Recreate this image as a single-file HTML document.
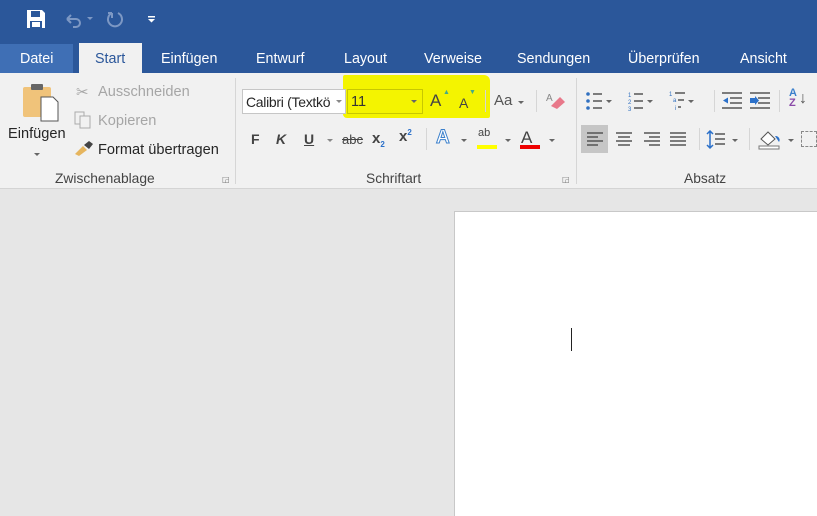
<!DOCTYPE html>
<html><head><meta charset="utf-8"><style>
*{margin:0;padding:0;box-sizing:border-box}
body{width:817px;height:516px;overflow:hidden;position:relative;background:#e6e6e6;font-family:"Liberation Sans","DejaVu Sans",sans-serif;}
.a{position:absolute;white-space:nowrap}
.tab{position:absolute;top:51px;font-size:14.3px;color:#fff}
.t{font-size:14.6px;color:#262626}
.g{color:#a6a6a6}
.lbl{font-size:13.8px;color:#444;top:171px}
.sep{position:absolute;width:1px;background:#d6d6d6}
.dd{position:absolute;width:0;height:0;border-left:3px solid transparent;border-right:3px solid transparent;border-top:3px solid #666}
</style></head><body>
<div class="a" style="left:0;top:0;width:817px;height:73px;background:#2b579a"></div>
<svg class="a" style="left:26px;top:9px" width="20" height="20" viewBox="0 0 20 20"><path d="M1 1h15l3 3v15H1z" fill="#fff"/><rect x="5" y="2" width="9" height="6" fill="#2b579a"/><rect x="4" y="12" width="12" height="7" fill="#2b579a"/><rect x="6" y="13" width="8" height="5" fill="#fff"/></svg>
<svg class="a" style="left:63px;top:9px" width="40" height="20" viewBox="0 0 40 20"><path d="M4 10h9a4 4 0 0 1 0 8h-3M4 10l4-4M4 10l4 4" stroke="#7d98c4" stroke-width="2" fill="none"/><path d="M24 8l3 3 3-3z" fill="#7d98c4"/></svg>
<svg class="a" style="left:106px;top:9px" width="20" height="20"><path d="M6 4a7 7 0 1 0 6 0M6 4v5M6 4h-4" stroke="#7d98c4" stroke-width="2" fill="none"/></svg>
<svg class="a" style="left:147px;top:14px" width="10" height="10"><rect x="1" y="2" width="7" height="1.5" fill="#fff"/><path d="M1 5h7l-3.5 3.5z" fill="#fff"/></svg>
<div class="a" style="left:0;top:44px;width:73px;height:29px;background:#3f6fb5"></div>
<div class="tab" style="left:20px">Datei</div>
<div class="a" style="left:79px;top:43px;width:63px;height:31px;background:#f1f1f1"></div>
<div class="tab" style="left:95px;color:#2b579a">Start</div>
<div class="tab" style="left:161px">Einfügen</div>
<div class="tab" style="left:256px">Entwurf</div>
<div class="tab" style="left:344px">Layout</div>
<div class="tab" style="left:424px">Verweise</div>
<div class="tab" style="left:517px">Sendungen</div>
<div class="tab" style="left:628px">Überprüfen</div>
<div class="tab" style="left:740px">Ansicht</div>
<div class="a" style="left:0;top:73px;width:817px;height:116px;background:#f1f1f1;border-bottom:1px solid #d4d4d4"></div>
<div class="a" style="left:343px;top:75px;width:147px;height:43px;background:#f4f400;border-radius:2px 6px 2px 4px"></div>
<div class="sep" style="left:235px;top:78px;height:106px"></div>
<div class="sep" style="left:576px;top:78px;height:106px"></div>
<svg class="a" style="left:22px;top:82px" width="38" height="40"><rect x="1" y="5" width="28" height="30" rx="2" fill="#f0c37a"/><rect x="9" y="2" width="12" height="6" rx="1" fill="#666"/><path d="M19 15h12l5 5v19H19z" fill="#fff" stroke="#555"/></svg>
<div class="a t" style="left:8px;top:126px">Einfügen</div>
<div class="dd" style="left:34px;top:153px"></div>
<div class="a t g" style="left:98px;top:84px">Ausschneiden</div>
<div class="a t g" style="left:98px;top:113px">Kopieren</div>
<div class="a t" style="left:98px;top:142px">Format übertragen</div>
<div class="a g" style="left:76px;top:83px;font-size:15px">✂</div>
<svg class="a" style="left:74px;top:111px" width="18" height="18"><rect x="1" y="1" width="9" height="12" fill="none" stroke="#aaa"/><rect x="6" y="5" width="10" height="12" fill="#f1f1f1" stroke="#aaa"/></svg>
<svg class="a" style="left:73px;top:140px" width="22" height="18"><path d="M2 14l8-8 4 4-8 6z" fill="#e6b55e"/><path d="M11 5l5-4 4 3-4 5z" fill="#444"/></svg>
<div class="a lbl" style="left:55px">Zwischenablage</div>
<div class="a" style="left:222px;top:175px;font-size:8px;color:#777">◲</div>
<div class="a" style="left:242px;top:89px;width:104px;height:25px;background:#fff;border:1px solid #c6c6c6"></div>
<div class="a" style="left:246px;top:94px;width:84px;overflow:hidden;font-size:14px;letter-spacing:-0.3px;color:#262626">Calibri (Textkörper)</div>
<div class="dd" style="left:336px;top:100px;border-top-color:#888"></div>
<div class="a" style="left:347px;top:89px;width:76px;height:25px;border:1px solid #c8c800"></div>
<div class="a t" style="left:351px;top:94px;color:#333">11</div>
<div class="dd" style="left:411px;top:100px"></div>
<div class="a" style="left:430px;top:91px;font-size:17px;color:#444">A</div>
<div class="a" style="left:443px;top:89px;font-size:7px;color:#4a8">▲</div>
<div class="a" style="left:459px;top:95px;font-size:14px;color:#444">A</div>
<div class="a" style="left:469px;top:89px;font-size:7px;color:#4a8">▼</div>
<div class="sep" style="left:485px;top:90px;height:22px"></div>
<div class="a" style="left:494px;top:92px;font-size:15px;color:#555">Aa</div>
<div class="dd" style="left:518px;top:101px"></div>
<div class="sep" style="left:536px;top:90px;height:22px"></div>
<svg class="a" style="left:546px;top:90px" width="22" height="22"><text x="0" y="11" font-size="10" fill="#888" font-family="Liberation Sans">A</text><path d="M5 16l9-9 5 5-8 7z" fill="#e8788a"/></svg>
<div class="a" style="left:251px;top:131px;font-size:14px;font-weight:bold;color:#444">F</div>
<div class="a" style="left:276px;top:131px;font-size:14px;font-weight:bold;font-style:italic;color:#444">K</div>
<div class="a" style="left:304px;top:131px;font-size:14px;font-weight:bold;text-decoration:underline;color:#444">U</div>
<div class="dd" style="left:327px;top:139px;border-top-color:#888"></div>
<div class="a" style="left:342px;top:132px;font-size:13px;text-decoration:line-through;color:#444">abc</div>
<div class="a" style="left:372px;top:130px;font-size:15px;font-weight:bold;color:#444">x<sub style="font-size:8px;color:#2b70c9">2</sub></div>
<div class="a" style="left:399px;top:128px;font-size:15px;font-weight:bold;color:#444">x<sup style="font-size:8px;color:#2b70c9">2</sup></div>
<div class="sep" style="left:426px;top:128px;height:22px"></div>
<div class="a" style="left:436px;top:127px;font-size:19px;color:#fff;-webkit-text-stroke:1px #3b80cc;font-weight:bold">A</div>
<div class="dd" style="left:461px;top:139px"></div>
<div class="a" style="left:478px;top:127px;font-size:11px;color:#444">ab</div>
<div class="a" style="left:477px;top:145px;width:20px;height:4px;background:#ffff00"></div>
<div class="dd" style="left:505px;top:139px"></div>
<div class="a" style="left:521px;top:128px;font-size:17px;color:#444">A</div>
<div class="a" style="left:520px;top:145px;width:20px;height:4px;background:#e00"></div>
<div class="dd" style="left:549px;top:139px"></div>
<div class="a lbl" style="left:366px">Schriftart</div>
<div class="a" style="left:562px;top:175px;font-size:8px;color:#777">◲</div>
<svg class="a" style="left:585px;top:91px" width="120" height="20"><g fill="#3070c0"><circle cx="3" cy="3" r="1.8"/><circle cx="3" cy="10" r="1.8"/><circle cx="3" cy="17" r="1.8"/></g><g stroke="#555" stroke-width="1.5"><path d="M8 3h9M8 10h9M8 17h9M49 3h9M49 10h9M49 17h9M90 2h10M93 9h6M93 16h3"/></g><g font-size="6" fill="#3070c0" font-family="Liberation Sans"><text x="43" y="6">1</text><text x="43" y="13">2</text><text x="43" y="20">3</text><text x="84" y="5">1</text><text x="88" y="11">a</text><text x="90" y="19">i</text></g><path d="M21 9h6l-3 3zM62 9h6l-3 3zM103 9h6l-3 3z" fill="#666"/></svg>
<div class="sep" style="left:714px;top:90px;height:22px"></div>
<svg class="a" style="left:721px;top:91px" width="52" height="20"><g stroke="#555" stroke-width="1.5"><path d="M1 2h20M9 7h12M9 12h12M1 17h20M29 2h20M37 7h12M37 12h12M29 17h20"/></g><path d="M2 9.5l5-3v6z M29 7h5v-2l4 4.5-4 4.5v-2h-5z" fill="#2b70c9"/></svg>
<div class="sep" style="left:779px;top:90px;height:22px"></div>
<div class="a" style="left:789px;top:88px;font-size:11px;font-weight:bold;color:#3b80cc;line-height:10px">A<br><span style="color:#8a4aa8">Z</span></div>
<div class="a" style="left:799px;top:90px;font-size:16px;color:#555">↓</div>
<div class="a" style="left:581px;top:125px;width:27px;height:28px;background:#c6c6c6"></div>
<svg class="a" style="left:586px;top:132px" width="110" height="14"><g stroke="#555" stroke-width="1.5"><path d="M1 1h16M1 5h11M1 9h16M1 13h11M30 1h16M32 5h12M30 9h16M32 13h12M58 1h16M63 5h11M58 9h16M63 13h11M84 1h16M84 5h16M84 9h16M84 13h16"/></g></svg>
<div class="sep" style="left:699px;top:128px;height:22px"></div>
<svg class="a" style="left:706px;top:130px" width="36" height="20"><path d="M4 1v17M1 4l3-3 3 3M1 15l3 3 3-3" stroke="#2b70c9" stroke-width="1.5" fill="none"/><path d="M9 4h10M9 9h10M9 14h10" stroke="#555" stroke-width="1.5"/><path d="M26 9h6l-3 3z" fill="#666"/></svg>
<div class="sep" style="left:749px;top:128px;height:22px"></div>
<svg class="a" style="left:757px;top:128px" width="40" height="22"><path d="M4 11l7-7 7 7-7 6z" fill="#fff" stroke="#555"/><path d="M18 8a4 4 0 0 1 4 6" fill="#2b70c9"/><rect x="2" y="18" width="20" height="3" fill="#fff" stroke="#777"/><path d="M31 11h6l-3 3z" fill="#666"/></svg>
<div class="a" style="left:801px;top:131px;width:16px;height:16px;border:1px dashed #888"></div>
<div class="a lbl" style="left:684px">Absatz</div>
<div class="a" style="left:454px;top:211px;width:363px;height:305px;background:#fff;border-left:1px solid #c8c8c8;border-top:1px solid #c8c8c8"></div>
<div class="a" style="left:571px;top:328px;width:1px;height:23px;background:#222"></div>
</body></html>
